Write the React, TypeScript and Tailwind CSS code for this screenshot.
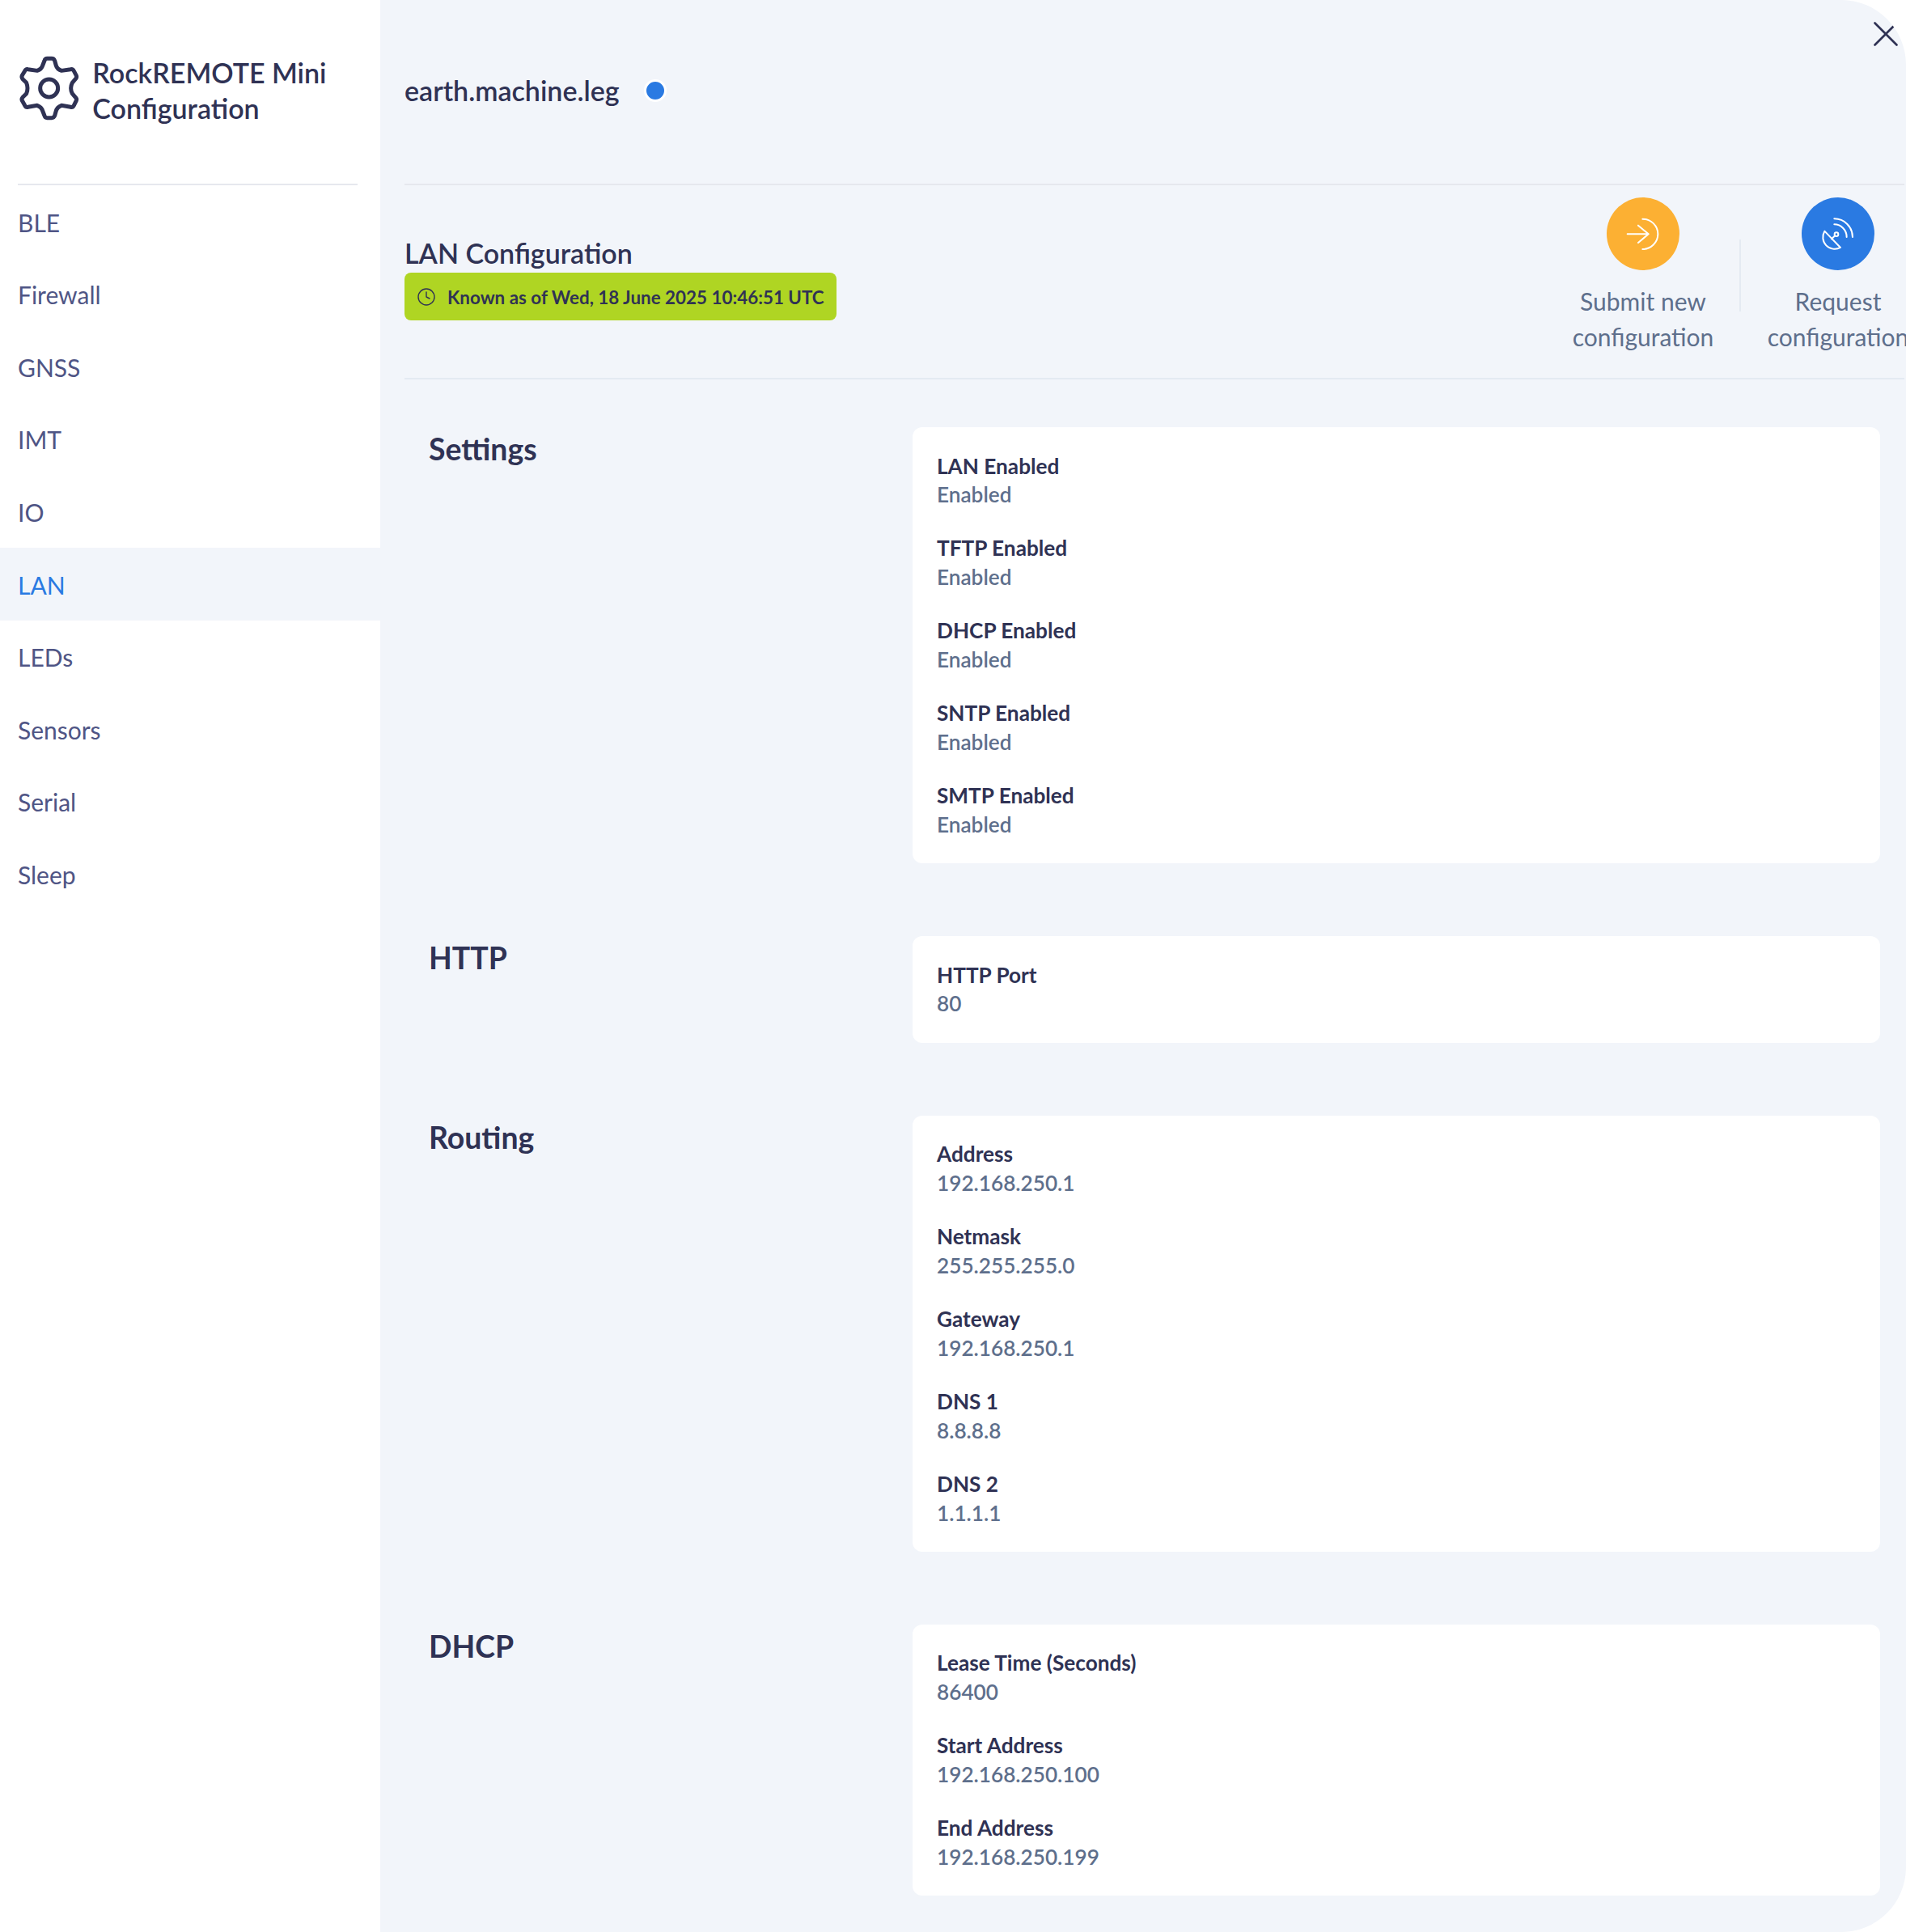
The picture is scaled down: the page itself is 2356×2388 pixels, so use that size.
import { Clock, X } from "lucide-react";

const nav = ["BLE", "Firewall", "GNSS", "IMT", "IO", "LAN", "LEDs", "Sensors", "Serial", "Sleep"];

const sections: { title: string; rows: [string, string][] }[] = [
  {
    title: "Settings",
    rows: [
      ["LAN Enabled", "Enabled"],
      ["TFTP Enabled", "Enabled"],
      ["DHCP Enabled", "Enabled"],
      ["SNTP Enabled", "Enabled"],
      ["SMTP Enabled", "Enabled"],
    ],
  },
  { title: "HTTP", rows: [["HTTP Port", "80"]] },
  {
    title: "Routing",
    rows: [
      ["Address", "192.168.250.1"],
      ["Netmask", "255.255.255.0"],
      ["Gateway", "192.168.250.1"],
      ["DNS 1", "8.8.8.8"],
      ["DNS 2", "1.1.1.1"],
    ],
  },
  {
    title: "DHCP",
    rows: [
      ["Lease Time (Seconds)", "86400"],
      ["Start Address", "192.168.250.100"],
      ["End Address", "192.168.250.199"],
    ],
  },
];

function Gear() {
  return (
    <svg width="77.3" height="81.7" viewBox="36 39 232 245" fill="none" stroke="currentColor" strokeWidth="15" strokeLinejoin="round" className="-mt-[5px] shrink-0">
      <path d="M135 60Q137 52 145 52L162 52Q170 52 173 60L178 78Q182 92 198 97L232 92Q240 90 244 98L253 115Q256 122 250 128L238 142Q228 162 238 182L250 196Q256 202 253 208L244 226Q240 234 232 232L198 226Q182 232 178 246L173 264Q170 272 162 272L145 272Q137 272 135 264L128 246Q124 232 108 226L74 232Q66 234 62 226L52 208Q49 202 54 196L68 182Q76 162 68 142L54 128Q49 122 52 115L62 98Q66 90 74 92L108 97Q124 92 128 78Z" />
      <circle cx="152" cy="162" r="33" />
    </svg>
  );
}

function ArrowIcon() {
  return (
    <svg width="42.7" height="42" viewBox="147 114 128 126" fill="none" stroke="white" strokeWidth="6" strokeLinecap="round" strokeLinejoin="round">
      <path d="M152 178H230M192 146L230 178L192 210" />
      <path d="M208 122A57 56 0 0 1 208 234" />
    </svg>
  );
}

function DishIcon() {
  return (
    <svg width="43.3" height="41.7" viewBox="870 115 130 125" fill="none" stroke="white" strokeWidth="6" strokeLinecap="round" strokeLinejoin="round">
      <path d="M922 122A68 68 0 0 1 990 190" />
      <path d="M922 143A46 46 0 0 1 968 190" />
      <path d="M886 168L945 229A44 44 0 0 1 886 168Z" />
      <path d="M912 197L925 185" />
      <circle cx="930" cy="180" r="7" />
    </svg>
  );
}

export default function App() {
  return (
    <div className="flex h-[2388px] w-[2356px] overflow-hidden bg-white font-['Lato',sans-serif] text-[#2f3254]">
      <aside className="w-[470px] shrink-0">
        <div className="ml-[22px] mr-[28px] flex h-[229px] items-center border-b-2 border-[#e6e8ee] pb-[4px]">
          <Gear />
          <div className="ml-[15px] whitespace-nowrap text-[34px] leading-[44px] font-semibold">RockREMOTE Mini<br />Configuration</div>
        </div>
        <nav>
          {nav.map((n) => (
            <div
              key={n}
              className={
                "flex h-[89.6px] items-center px-[22px] pt-[2.5px] text-[30px] " +
                (n === "LAN" ? "bg-[#f2f5fa] text-[#2a7ae2]" : "text-[#4f5585]")
              }
            >
              {n}
            </div>
          ))}
        </nav>
      </aside>
      <main className="relative min-w-0 flex-1 overflow-hidden rounded-r-[80px] bg-[#f2f5fa] pl-[30px] pr-[2px]">
        <X size={54} strokeWidth={1.2} className="absolute -right-[2px] top-[15px]" />
        <div className="flex h-[229px] items-center border-b-2 border-[#e6e8ee] pb-[4px]">
          <div className="text-[34px] font-semibold">earth.machine.leg</div>
          <span className="ml-[30px] h-[28px] w-[28px] rounded-full border-[3px] border-white bg-[#2a7ae2]" />
        </div>
        <div className="flex h-[240px] items-start border-b-2 border-[#e4eaf2]">
          <div className="pt-[60px]">
            <div className="text-[34px] leading-[48px] font-semibold">LAN Configuration</div>
            <div className="flex h-[59px] items-center rounded-[8px] bg-[#afd523] px-[15px] pt-[3px] text-[22.4px] font-bold">
              <Clock size={24} strokeWidth={1.4} className="-mt-[3px] mr-[14px]" />
              Known as of Wed, 18 June 2025 10:46:51 UTC
            </div>
          </div>
          <div className="-mr-[5px] ml-auto flex items-start pt-[15px]">
            <div className="flex w-[174px] flex-col items-center">
              <div className="flex h-[90px] w-[90px] items-center justify-center rounded-full bg-[#fcb033]">
                <ArrowIcon />
              </div>
              <div className="mt-[16px] whitespace-nowrap text-center text-[30px] leading-[44px] text-[#5e6f8c]">Submit new<br />configuration</div>
            </div>
            <div className="ml-[32px] mr-[33px] mt-[52px] h-[89px] w-[2px] bg-[#e4eaf2]" />
            <div className="flex w-[174px] flex-col items-center">
              <div className="flex h-[90px] w-[90px] items-center justify-center rounded-full bg-[#2a7ae2]">
                <DishIcon />
              </div>
              <div className="mt-[16px] whitespace-nowrap text-center text-[30px] leading-[44px] text-[#5e6f8c]">Request<br />configuration</div>
            </div>
          </div>
        </div>
        <div className="flex flex-col gap-[90px] pr-[30px] pt-[59px]">
          {sections.map((s) => (
            <section key={s.title} className="flex items-start">
              <h2 className="w-[628px] shrink-0 pl-[30px] pt-[2px] text-[37.4px] leading-[50px] font-bold">{s.title}</h2>
              <div className="flex flex-1 flex-col gap-[30px] rounded-[12px] bg-white px-[30px] pb-[29.5px] pt-[30.5px]">
                {s.rows.map(([label, value]) => (
                  <div key={label} className="text-[26.2px] leading-[35.9px]">
                    <div className="font-bold">{label}</div>
                    <div className="font-semibold text-[#5e6f8c]">{value}</div>
                  </div>
                ))}
              </div>
            </section>
          ))}
        </div>
      </main>
    </div>
  );
}
